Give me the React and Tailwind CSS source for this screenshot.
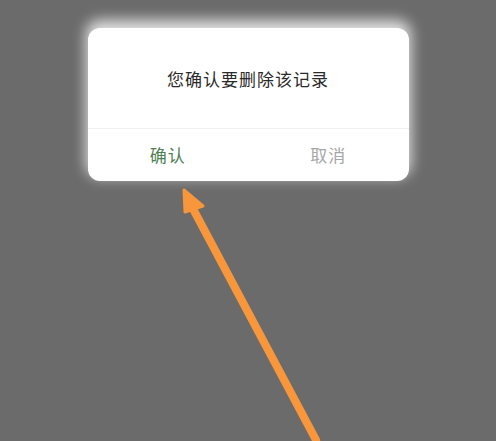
import React from 'react';

const FONT = { fontFamily: '"Noto Sans CJK SC", "Noto Sans", sans-serif' };

function PointerArrow() {
  // orange pointer aimed at the confirm button
  return (
    <svg className="absolute left-0 top-0" width="496" height="441" viewBox="0 0 496 441">
      <line x1="316" y1="440" x2="191" y2="205" stroke="#f7963b" strokeWidth="8" strokeLinecap="round" />
      <polygon points="184,190 203,206 185,212" fill="#f7963b" stroke="#f7963b" strokeWidth="3" strokeLinejoin="round" />
    </svg>
  );
}

export default function App() {
  return (
    <div className="relative w-[496px] h-[441px] bg-[#6b6b6b] overflow-hidden" style={FONT}>
      <div className="flex justify-center pt-[28px]">
        <div className="w-[321px] bg-white rounded-[12px] shadow-[0_-6px_14px_2px_rgba(255,255,255,0.8)]">
          <div className="h-[101px] flex items-center justify-center border-b border-[#f0f0f0]">
            <span className="text-[17px] tracking-[1px] text-[#2a2a2a] mt-[1px]">您确认要删除该记录</span>
          </div>
          <div className="h-[52px] grid grid-cols-2">
            <button className="flex items-center justify-center text-[17px] tracking-[1px] text-[#4f7f52]">确认</button>
            <button className="flex items-center justify-center text-[17px] tracking-[1px] text-[#a6a6a6]">取消</button>
          </div>
        </div>
      </div>
      <PointerArrow />
    </div>
  );
}
